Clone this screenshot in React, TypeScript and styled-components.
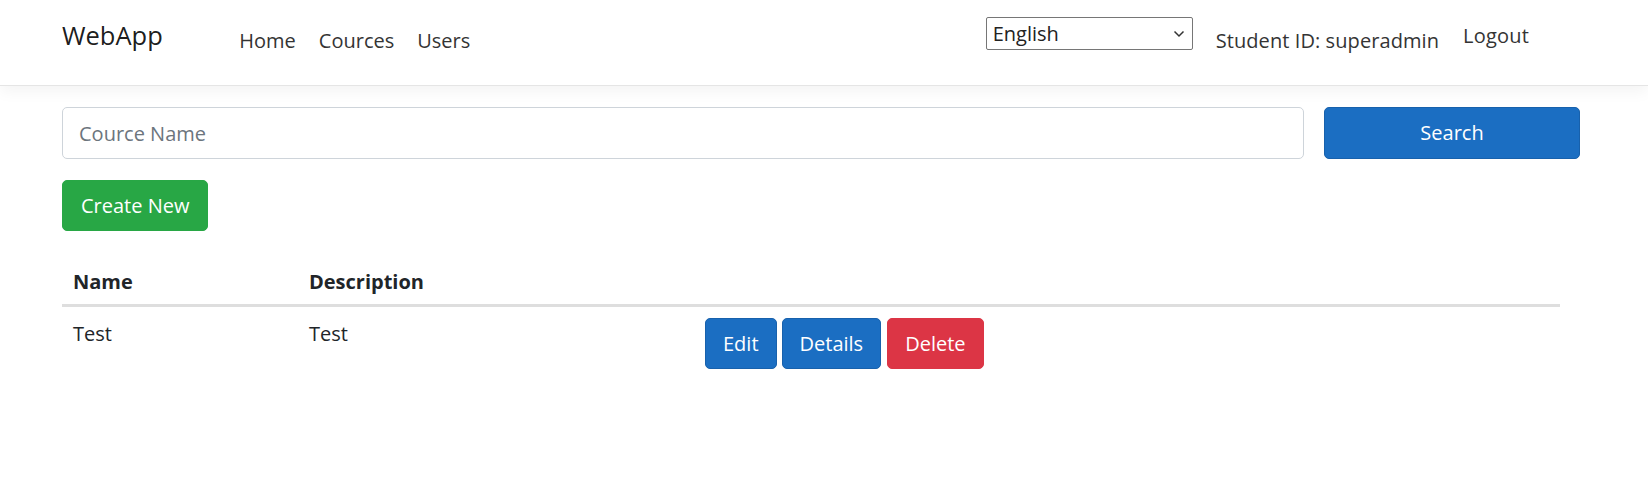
import styled, { createGlobalStyle } from "styled-components";

const GlobalStyle = createGlobalStyle`
   *, *::before, *::after {
      box-sizing: border-box;
   }

   body {
      margin: 0;
      background: #fff;
      color: #212529;
      font-family: "Open Sans", "Liberation Sans", sans-serif;
      font-size: 20px;
      line-height: 1.5;
   }
`;

const courses = [{ id: 1, name: "Test", description: "Test" }];

export default function App() {
   return (
      <>
         <GlobalStyle />
         <NavbarStyled>
            <Brand href="#">WebApp</Brand>
            <NavList>
               <NavLink href="#">Home</NavLink>
               <NavLink href="#">Cources</NavLink>
               <NavLink href="#">Users</NavLink>
            </NavList>
            <RightGroup>
               <SelectWrap>
                  <LanguageSelect defaultValue="en">
                     <option value="en">English</option>
                     <option value="ru">Русский</option>
                  </LanguageSelect>
                  <Chevron width="12" height="8" viewBox="0 0 12 8">
                     <path d="M1.5 1.5 6 6 10.5 1.5" fill="none" stroke="#333" strokeWidth="1.5" />
                  </Chevron>
               </SelectWrap>
               <StudentId>Student ID: superadmin</StudentId>
               <Logout href="#">Logout</Logout>
            </RightGroup>
         </NavbarStyled>

         <Main>
            <SearchRow>
               <SearchInput placeholder="Cource Name" />
               <Button $variant="primary" $wide>
                  Search
               </Button>
            </SearchRow>

            <CreateRow>
               <Button $variant="success" $pad={18}>
                  Create New
               </Button>
            </CreateRow>

            <Table>
               <colgroup>
                  <col style={{ width: 236 }} />
                  <col style={{ width: 396 }} />
                  <col />
               </colgroup>
               <thead>
                  <tr>
                     <th>Name</th>
                     <th>Description</th>
                     <th></th>
                  </tr>
               </thead>
               <tbody>
                  {courses.map(({ id, name, description }) => (
                     <tr key={id}>
                        <td>{name}</td>
                        <td>{description}</td>
                        <td>
                           <Actions>
                              <Button $variant="primary">Edit</Button>
                              <Button $variant="primary">Details</Button>
                              <Button $variant="danger">Delete</Button>
                           </Actions>
                        </td>
                     </tr>
                  ))}
               </tbody>
            </Table>
         </Main>
      </>
   );
}

const NavbarStyled = styled.header`
   display: flex;
   align-items: flex-start;
   height: 86px;
   padding: 0 119px 0 62px;
   background: #fff;
   border-bottom: 1px solid #e5e5e5;
   box-shadow: 0 5px 15px rgba(0, 0, 0, 0.05);
`;

const Brand = styled.a`
   margin-top: 16px;
   margin-right: 65px;
   font-size: 25.5px;
   line-height: 1.5;
   color: rgba(0, 0, 0, 0.9);
   text-decoration: none;
   white-space: nowrap;
`;

const NavList = styled.nav`
   display: flex;
   margin-top: 26px;
`;

const NavLink = styled.a`
   padding: 0 11.5px;
   line-height: 30px;
   color: #343434;
   text-decoration: none;
`;

const RightGroup = styled.div`
   display: flex;
   align-items: flex-start;
   margin-left: auto;
`;

const SelectWrap = styled.div`
   position: relative;
   margin-top: 17px;
   width: 207px;
   height: 33px;
`;

const LanguageSelect = styled.select`
   appearance: none;
   width: 100%;
   height: 100%;
   padding: 0 0 0 6px;
   border: 1px solid #767676;
   border-radius: 2px;
   background: #fff;
   color: #222;
   font-family: inherit;
   font-size: 20px;
   line-height: 31px;
`;

const Chevron = styled.svg`
   position: absolute;
   top: 13px;
   right: 8px;
   pointer-events: none;
`;

const StudentId = styled.span`
   margin: 26px 0 0 23px;
   line-height: 30px;
   color: #343434;
   white-space: nowrap;
   letter-spacing: 0.08px;
`;

const Logout = styled.a`
   margin: 21px 0 0 24px;
   line-height: 30px;
   color: #343434;
   text-decoration: none;
   letter-spacing: 0.2px;
`;

const Main = styled.main`
   padding: 21px 68px 0 62px;
`;

const SearchRow = styled.div`
   display: flex;
   gap: 20px;
`;

const SearchInput = styled.input`
   flex: 1;
   height: 52px;
   padding: 0 16px;
   border: 1px solid #ced4da;
   border-radius: 5px;
   font-family: inherit;
   font-size: 20px;
   color: #495057;

   &::placeholder {
      color: #6c757d;
   }
`;

const variants = {
   primary: { bg: "#1b6ec2", border: "#1861ac" },
   success: { bg: "#28a745", border: "#28a745" },
   danger: { bg: "#dc3545", border: "#dc3545" },
};

const Button = styled.button<{
   $variant: keyof typeof variants;
   $wide?: boolean;
   $pad?: number;
}>`
   display: inline-flex;
   align-items: center;
   justify-content: center;
   width: ${({ $wide }) => ($wide ? "256px" : "auto")};
   height: ${({ $wide }) => ($wide ? "52px" : "51px")};
   padding: 0 ${({ $pad }) => $pad ?? 17}px;
   border: 1px solid ${({ $variant }) => variants[$variant].border};
   border-radius: 5px;
   background: ${({ $variant }) => variants[$variant].bg};
   color: #fff;
   font-family: inherit;
   font-size: 20px;
   line-height: 30px;
   cursor: pointer;
`;

const CreateRow = styled.div`
   margin-top: 21px;
`;

const Table = styled.table`
   width: 1498px;
   margin-top: 25px;
   border-collapse: collapse;
   table-layout: fixed;

   th {
      padding: 11px 11px 7px;
      border-bottom: 3px solid #dedede;
      font-weight: 700;
      text-align: left;
      line-height: 30px;
   }

   td {
      padding: 11px;
      vertical-align: top;
      line-height: 30px;
   }

   td:first-child,
   td:nth-child(2) {
      padding-top: 12px;
   }
`;

const Actions = styled.div`
   display: flex;
   gap: 5px;

   & > *:last-child {
      margin-left: 1px;
   }
`;
